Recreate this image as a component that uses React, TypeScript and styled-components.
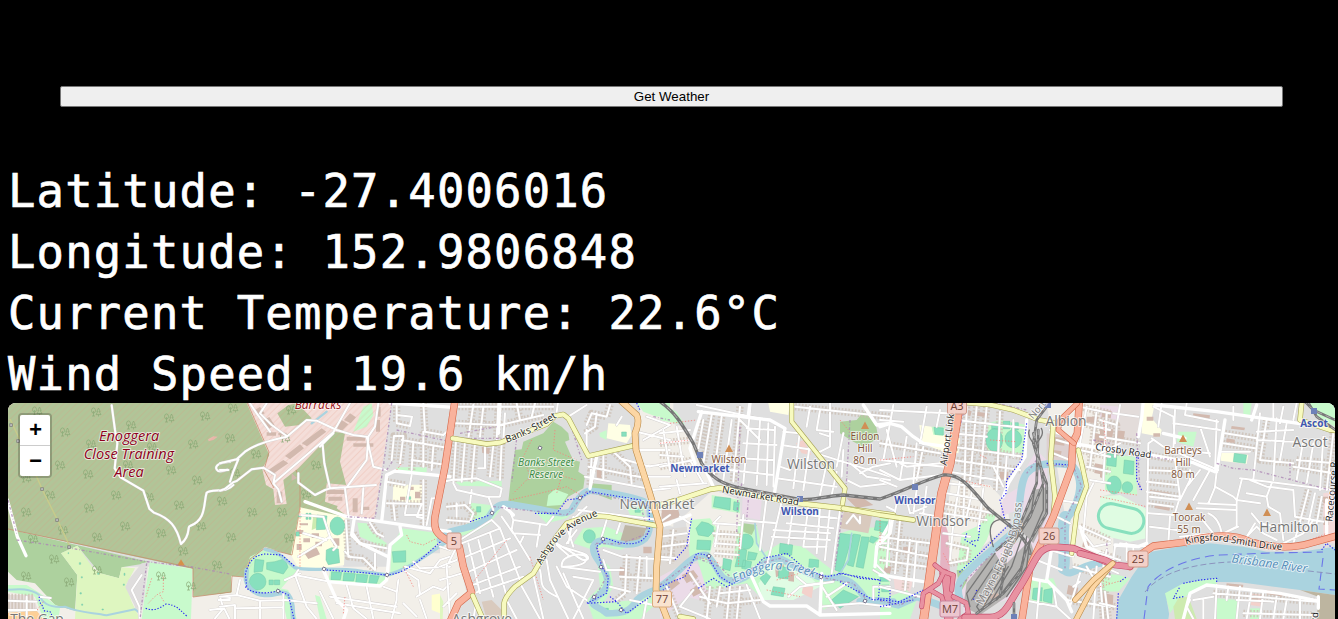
import React from 'react';
import styled, { createGlobalStyle } from 'styled-components';

const GlobalStyle = createGlobalStyle`
  html, body { height: 100%; }
  body { margin: 0; background: #000; color: #fff; overflow: hidden; }
`;

const Page = styled.main`
  display: flex;
  flex-direction: column;
  height: 619px;
  box-sizing: border-box;
  padding: 34px 3px 0 8px;
  overflow: hidden;
`;

const WeatherButton = styled.button`
  margin: 52px;
  height: 21px;
  flex: none;
  box-sizing: border-box;
  padding: 1px 6px;
  border: 1px solid #767676;
  border-radius: 2px;
  background: #efefef;
  color: #000;
  font: 13.333px 'Liberation Sans', Arial, sans-serif;
  line-height: 17px;
`;

const Readings = styled.section`
  display: flex;
  flex-direction: column;
  flex: none;
`;

const Reading = styled.div`
  height: 61px;
  box-sizing: border-box;
  padding-top: 2px;
  line-height: 61px;
  white-space: pre;
  font-family: Consolas, 'DejaVu Sans Mono', monospace;
  font-size: 45.5px;
  letter-spacing: 1.2px;
  -webkit-text-stroke: 0.7px #fff;
`;

const MapFrame = styled.section`
  position: relative;
  flex: none;
  height: 400px;
  border-radius: 8px;
  overflow: hidden;
  background: #dfdfdf;
`;

const MapCanvas = styled.svg`
  display: block;
  width: 1327px;
  height: 216px;
`;

const ZoomControl = styled.div`
  position: absolute;
  top: 10px;
  left: 10px;
  display: flex;
  flex-direction: column;
  border: 2px solid rgba(0, 0, 0, 0.2);
  border-radius: 4px;
  background-clip: padding-box;
`;

const ZoomButton = styled.button<{ $first?: boolean }>`
  width: 30px;
  height: ${(p) => (p.$first ? 31 : 30)}px;
  padding: 4px 0 0;
  border: 0;
  border-bottom: ${(p) => (p.$first ? '1px solid #ccc' : '0')};
  border-radius: ${(p) => (p.$first ? '2px 2px 0 0' : '0 0 2px 2px')};
  background: #fff;
  color: #000;
  font: bold 22px 'Liberation Mono', monospace;
  line-height: 26px;
  text-indent: 1px;
`;

const Line = styled.path`
  fill: none;
  stroke-linecap: round;
  stroke-linejoin: round;
`;

const Houses = styled(Line)`
  stroke: #cbbcb0;
  stroke-width: 22px;
  stroke-dasharray: 5 5;
  stroke-linecap: butt;
  opacity: 0.72;
`;

const StreetEdge = styled(Line)`
  stroke: #d0cccb;
  stroke-width: 8px;
`;

const Street = styled(Line)`
  stroke: #fff;
  stroke-width: 6px;
`;

const Avenue = styled(Line)`
  stroke: #fff;
  stroke-width: 10px;
`;

const CyclePath = styled(Line)`
  stroke: #2b2bf2;
  stroke-width: 3.4px;
  stroke-dasharray: 4 5;
  stroke-linecap: butt;
`;

const FootPath = styled(Line)`
  stroke: #f5837c;
  stroke-width: 2.4px;
  stroke-dasharray: 4 5;
  stroke-linecap: butt;
`;

const Boundary = styled(Line)`
  stroke: #ac87b4;
  stroke-width: 4px;
  stroke-dasharray: 8 6 2 6;
  stroke-linecap: butt;
  opacity: 0.8;
`;

const Label = styled.text<{ $color?: string; $size?: number; $italic?: boolean; $bold?: boolean; $halo?: string }>`
  font-family: 'Open Sans', 'Noto Sans', sans-serif;
  font-size: ${(p) => p.$size ?? 10}px;
  font-style: ${(p) => (p.$italic ? 'italic' : 'normal')};
  font-weight: ${(p) => (p.$bold ? 700 : 400)};
  fill: ${(p) => p.$color ?? '#222'};
  stroke: ${(p) => p.$halo ?? 'rgba(255,255,255,0.65)'};
  stroke-width: 2px;
  stroke-linejoin: round;
  paint-order: stroke;
  text-anchor: middle;
`;

const WOOD = '#b1c598';
const FOREST = '#add19e';
const MEADOW = '#def6c0';
const PARK = '#c8facc';
const PITCH = '#88e0be';
const SCHOOL = '#ffffe5';
const PALE = '#f2efe9';
const BASE = '#f4ded9';
const BLOCK = '#d9cabe';
const LILAC = '#ebdbe8';
const WATER = '#aad3df';

const RED = ['#f9b29c', '#d5684a'];
const ORANGE = ['#fcd6a4', '#ba8a48'];
const YELLOW = ['#f7fabf', '#a8a456'];
const PINK = ['#e892a2', '#c44a68'];

type Road = [string[], number, string];

interface Sheet {
  x: number;
  areas: [string, string][];
  pitches?: string;
  blocks?: string;
  water?: [number, string][];
  streets: string;
  avenues?: string;
  houses?: string;
  roads?: Road[];
  cycle?: string;
  foot?: string;
  boundary?: string;
}

const sheets: Sheet[] = [
  {
    x: 0,
    areas: [
      [PALE, 'M0 500H730V680H0Z'],
      [WOOD, 'M0 0H700V577L580 590L578 507L24 387Z'],
      [FOREST, 'M24 387L445 485L425 492L365 502L357 535L300 520L232 437L183 460L232 525L225 632L165 615L105 550L50 540L24 515Z'],
      [MEADOW, 'M183 460L232 437L280 505L300 520L357 535L365 502L405 505L378 555L395 605L420 657H225L232 525Z'],
      ['#dfdddd', 'M445 487L425 490L385 540L376 562L400 610L420 657L432 600Z'],
      [PARK, 'M449 487L578 507L573 657H425L438 560Z'],
      [PARK, 'M24 555L80 555L120 580L160 610L180 625L175 657H130L105 590L24 575Z'],
      ['#e5dddb', 'M24 585H100L112 630H24Z'],
      ['#fdcf97', 'M24 638L110 632L130 657H24Z'],
      ['#e9b9ad', 'M624 118L640 109L653 110L640 120L626 124Z'],
      ['#d69049', 'M531 497L543 478L555 497Z'],
    ],
    pitches: 'M204 458h2v3h-2ZM238 488h4v5h-4ZM293 519h4v4h-4ZM244 530h3v4h-3ZM372 520h3v6h-3ZM240 578h4v4h-4ZM370 552h3v4h-3ZM245 612h3v4h-3ZM306 627h4v3h-4Z',
    water: [
      [6, 'M20 570C60 566 90 565 118 585C125 605 145 625 195 620C240 640 280 637 320 646L405 628L420 640'],
    ],
    streets:
      'M335 16L345 90L352 130L344 205L362 232L430 272L448 326L462 338C510 355 530 380 543 432C575 405 560 380 570 378C620 360 610 310 620 278C635 265 680 280 700 255M690 186C650 185 640 205 655 213C665 216 675 212 682 209M425 525L395 570L418 620L419 657M24 602L110 605M24 630H110M80 590V650M118 590L152 594M660 590L670 625L630 630M670 620L690 660M670 625L645 655M660 590L690 594M655 600H690',
    avenues: 'M22 300L52 410L78 467',
    houses: 'M24 616H105M24 592H100',
    cycle: 'M437 625C460 635 480 625 498 612C530 615 540 630 560 648M118 590C115 615 130 610 130 630C140 640 150 625 155 645',
    foot: 'M490 530V575C470 580 455 600 445 610M480 585L492 605M455 535L438 590M130 605L110 632',
    boundary: 'M50 420L210 444L440 485L570 500L690 522M440 490L420 657M24 300L50 400',
  },
  {
    x: 220,
    areas: [
      [PALE, 'M30 460H700V680H0V580H35Z'],
      [WOOD, 'M0 0H400V360H238L213 465L135 440L90 478L74 530L33 528L33 575L0 583Z'],
      [BASE, 'M80 9H515L463 357L380 347L350 325L380 260L360 185L375 100L340 95L235 205L190 240L200 312L165 315L160 268L138 255L127 208L148 165Z'],
      [WOOD, 'M172 40L205 15L232 10L275 55L240 75L195 80Z'],
      [BASE, 'M320 250L380 255L372 325L315 305Z'],
      ['#dfdfdf', 'M515 9H700V400L540 385L500 500H370L378 355L463 357L490 200Z'],
      [SCHOOL, 'M240 322L380 352L372 495L315 505L235 505L213 465Z'],
      [SCHOOL, 'M520 254H610L600 312L518 300Z'],
      [PARK, 'M75 520L90 470L135 448L190 465L232 510L210 535L175 575L100 578Z'],
      [PARK, 'M330 510L500 525L490 555L325 545Z'],
      [PARK, 'M412 368L440 370L455 395L500 430L498 445L420 410Z'],
      [PARK, 'M545 385L660 400L650 435L580 490L510 530L515 440Z'],
      [PARK, 'M180 565L205 570L230 657H200Z'],
      [PARK, 'M285 585L300 590L320 657H300Z'],
      [PARK, 'M430 20L455 10L460 45L440 80L400 95Z'],
      [PARK, 'M530 202H620V217H530Z'],
      ['#ffffcf', 'M635 585L665 580L672 620L660 640L635 630Z'],
      ['#cdebb0', 'M280 345L295 345L288 385L275 390Z'],
    ],
    blocks:
      'M105 30l15-10 14 20-15 9ZM130 60l18-9 16 25-17 10ZM175 98h25v8h-25ZM140 97h28v10h-28ZM145 210l45-30 15 10-50 34ZM195 168l45-35 12 12-42 33ZM245 130l60-45 14 10-58 44ZM170 275h17v35h-17ZM345 80l20-20 20 13-20 20ZM372 60l18-20 18 12-16 18ZM380 110h55v12h-55ZM400 130h60v10h-60ZM320 270h55v12h-55ZM325 290h42v12h-42ZM398 295h15v42h-15ZM425 320h23v10h-23ZM470 20h12v30h-12ZM468 60h12v35h-12ZM240 370h24v6h-24ZM230 390h20v12h-20ZM275 400h22v14h-22ZM250 415h20v12h-20ZM230 432h15v18h-15ZM286 425h20v14h-20ZM335 365h20v20h-20ZM565 260h16v10h-16ZM585 275h16v20h-16ZM540 290h16v10h-16ZM215 220l16 14-16 8ZM265 330h40v0h-40ZM250 455l40-12 10 20-35 14ZM340 415h18v22h-18Z',
    pitches:
      'M291 345L321 348L316 388L289 389ZM330 378a22 27 0 1 0 44 0a22 27 0 1 0-44 0M319 450L335 443L355 447L359 488L325 494L318 480ZM105 478L132 481L127 514L102 517ZM140 488L165 485L195 476L204 502L190 522L165 515L140 508ZM88 545a25 25 0 1 0 50 0a25 25 0 1 0-50 0M147 540h13v14h-13ZM163 540h16v14h-16ZM517 455L557 452V486L520 487ZM335 515l30 2-4 22h-28ZM372 518l34 3-5 22h-32ZM410 522l34 3-5 23h-32ZM450 526l28 2-8 22h-24ZM228 396h10v12h-10ZM258 340h6v6h-6ZM267 340h6v6h-6ZM258 352h6v6h-6ZM267 352h6v6h-6ZM560 290h12v8h-12ZM236 345h9v6h-9Z',
    water: [
      [14, 'M80 510L78 540C85 570 110 585 145 585C170 585 190 570 205 585C225 610 215 640 220 657'],
      [10, 'M135 448C180 455 195 480 225 503C260 515 340 500 430 515L500 525C570 510 620 460 690 420'],
      [7, 'M275 70L320 35'],
    ],
    streets:
      'M0 190L50 178L75 155C110 130 160 120 200 110L260 60L290 62L350 90L400 105L440 110M30 245C40 210 50 190 55 178M0 272C30 265 30 245 50 243L95 208L130 203M130 203L165 225L160 250L340 97L390 9M140 10L120 40L155 75L200 108M90 10L110 40L150 95M235 220V248L285 285L315 270L330 265L468 255M308 135L313 190L330 265M340 100L300 140M380 262L440 180L445 110L465 80L475 9M440 110L460 200L500 210M375 265L385 345M425 340L430 265M160 250L175 268L185 305M0 210L25 210M530 40V70L570 78L576 50L530 45L530 10M610 10L615 95L670 105L690 85M515 180L522 108H550L540 190M545 120L690 145M580 125L575 210M610 95V200M640 140L635 210M575 180L680 195M610 240V375M575 225L555 340M500 245L555 255M500 310L605 312L590 350L610 355M520 310L525 360M555 345H610M635 295L620 375M640 295H650M378 360L385 470L430 475L465 510M400 400L420 430L500 445M450 368L470 400L490 410M465 460V510M375 455L390 470M235 510L225 525L330 545M195 540L240 520M190 580V657M195 600L290 610M0 590L50 585L60 540M50 585L120 602L190 600M50 625L190 622M120 602V657M0 620L45 615V657M225 525L260 620L290 657M300 575L340 657M330 590L530 620M350 610L540 640M380 555L400 625L440 657M440 560L460 657M490 560L530 575V600L515 657M535 540L530 580M550 510L595 540L600 580M555 500L630 520L660 480L690 470M590 590L640 560L670 570L690 550M600 600L620 657M550 610L590 650M660 440L690 450M580 485L600 505L690 500M240 345L310 350L330 410L350 440L340 450M330 410L300 430L235 470M250 400L320 420',
    avenues:
      'M485 365L500 225L525 213L690 230M255 305L380 350L690 395M402 360L395 405L420 430L500 468M540 380L545 405L510 435L500 540L480 558L325 545L310 510M325 545L350 600L380 630L370 660M510 9L700 22',
    houses: 'M530 20V70L570 78M610 10L615 95L670 105M515 180L522 108H550L540 190M545 120L690 145M580 125L575 210M610 95V200M640 140L635 210M575 180L680 195M610 240V375M500 245L555 255M500 310L605 312M520 310L525 360M378 360L385 470L430 475L465 510M400 400L420 430L500 445M450 368L470 400L490 410',
    cycle: 'M80 560L76 520C90 475 110 465 135 462L185 465L225 500M76 560C90 578 130 585 175 572L205 585L222 657M320 510L430 518L500 525C570 520 620 460 670 418',
    foot: 'M560 405L570 425L610 435L650 415M530 210L545 190M550 500L580 560M370 640L375 590M240 325V500',
    boundary: 'M515 9L490 200L465 355L380 350M530 90L690 125M500 210L520 180',
  },
  {
    x: 440,
    areas: [
      [PALE, 'M600 9H700V380L650 370L600 180Z'],
      [PALE, 'M0 430H45L80 580L30 657H0Z'],
      [FOREST, 'M340 65L365 80L385 100L388 120L375 125L390 160L400 180L420 185L415 215L435 228L430 265L385 290L350 335L205 305L212 240L225 150L245 148L250 125L310 100Z'],
      [PARK, 'M325 285L345 268L385 283L365 315L320 318Z'],
      [PARK, 'M93 308L150 315L180 330L150 370L100 400L50 410L45 395L90 365Z'],
      [PARK, 'M590 9H690V45L650 50L610 35Z'],
      [PARK, 'M400 430L430 385L500 380L550 400L590 430L540 450L490 440L460 450Z'],
      [PARK, 'M285 335L395 340L380 355L320 370Z'],
      [PARK, 'M470 465L510 500L520 560L490 610L580 600L650 575L690 570L600 657H460L440 600L480 560Z'],
      [PARK, 'M45 245L185 242V260L60 257Z'],
      [PARK, 'M478 100L500 90L500 120L480 110Z'],
      [PARK, 'M560 320L610 320L615 350L570 345Z'],
      [SCHOOL, 'M505 70L570 75L575 105L560 130L500 115Z'],
      [MEADOW, 'M0 585L10 605L8 657H0Z'],
      [BLOCK, 'M125 605L155 600L185 630L180 657H140Z'],
      ['#bdb5a5', 'M555 375L620 385L600 432L540 425Z'],
      [FOREST, 'M450 250L515 255V300L450 275Z'],
    ],
    blocks: 'M125 140l25 5-3 17-20-3ZM665 340l25-12v30l-25 7ZM610 440h25v20h-25ZM540 500l17 5-3 24-17-4ZM470 210h14v28h-14Z',
    pitches: 'M110 320h12v16h-12ZM430 409a18 20 0 1 0 36 0a18 20 0 1 0-36 0M545 96h14v13h-14ZM485 625h20v14h-20ZM585 325h16v12h-16Z',
    water: [
      [20, 'M0 420L30 395C90 380 130 375 150 345C170 310 190 310 220 314L300 328C350 340 380 345 395 330C410 300 430 275 450 272C500 278 560 285 600 300C640 310 630 350 628 390C620 435 570 438 530 430C490 420 470 415 460 440C455 470 490 490 500 530C510 570 480 580 460 600C450 620 480 620 500 640C540 640 570 640 590 600C620 570 650 575 700 545'],
    ],
    streets:
      'M55 20L340 20M45 70L180 75L310 45M100 15L85 115M130 20L120 110M175 10L170 120M195 40L190 120M230 10L240 60M285 10L275 50M355 0L350 35M48 120L40 250M75 125L65 245M105 130L95 245M135 132V205H115M160 135L150 230M185 130L180 240M10 245L35 240L110 235L185 265L180 290L140 290L50 270L40 250M20 320L75 315L100 340L90 365L20 360M50 310V350M95 270L90 310M145 290L160 330M470 40L465 80L435 100M510 15L500 50L455 40L440 75M545 50L530 75M385 50L440 15M455 170L450 260M490 160V235M445 200L620 235M435 230L620 265M520 155L570 200L575 250M540 175L630 200M440 90V150M600 150L690 150M610 120L690 75M590 95L690 120M620 200L690 190M625 230L690 230M640 270L690 265M620 50L690 75M655 370L690 345M630 335L690 320M155 360L60 420M155 360L180 385L65 430M180 385L240 540M150 400L200 590M115 420L160 590M85 430L120 580M65 475L210 415M75 520L230 450M85 560L240 500M100 580L250 530M210 335L220 360L320 375L340 350M185 350L220 400L300 405M220 360L215 390L270 480M300 375L290 440M250 410L240 430M355 400L440 320M415 330L660 360M400 350L385 430M380 380L400 440M350 430L400 460C440 500 460 470 430 460L350 435L390 470M365 500C360 460 440 455 440 475C440 500 380 500 365 500L480 515M320 480L330 540L385 657M300 510C310 550 290 560 350 590M280 525L310 657M240 550L300 657M350 500L380 560L440 600M370 520L430 657M400 530L460 540L400 657M200 600L230 657M410 390L380 430M500 360L485 410M540 370L530 400M490 450L545 470L690 480M560 465L555 580L530 600M540 530L640 535M600 470L590 580M620 470V535M490 480L500 510L550 510M510 560L570 575M0 500L50 480M0 540L65 520M45 450L20 500L30 657M50 580L10 620M110 600L100 657M570 600L640 615M620 600L610 657M640 615L690 600',
    avenues: 'M655 378L690 370M190 320L205 330L220 345M175 100L180 10M450 265L470 170',
    houses: 'M55 20L340 20M45 70L180 75L310 45M100 15L85 115M130 20L120 110M175 10L170 120M230 10L240 60M48 120L40 250M75 125L65 245M105 130L95 245M160 135L150 230M185 130L180 240M20 320L75 315L100 340L90 365L20 360M470 40L465 80L435 100M510 15L500 50L455 40L440 75M455 170L450 260M490 160V235M445 200L620 235M520 155L570 200L575 250M540 530L640 535M600 470L590 580M560 465L555 580L530 600',
    roads: [
      [RED, 20, 'M45 0L15 200L-15 350C-20 390 -10 405 30 425L58 440L70 500L95 577L55 610L30 665'],
      [YELLOW, 14, 'M38 115L140 132L180 128L320 72L345 48L370 43L385 55L445 168L580 137'],
      [YELLOW, 14, 'M192 665V610Q195 590 225 560L280 520L330 435L380 370L450 347L500 350L655 378'],
      [YELLOW, 14, 'M98 587L130 660'],
      [ORANGE, 18, 'M540 0L590 45Q600 65 585 100L588 150L620 250L660 380L650 500L648 570L685 665'],
    ],
    cycle: 'M90 365L150 345M285 340L350 340L380 300L420 295L450 275L600 300L628 320V390C610 440 560 440 500 415L470 440L485 500L505 530L500 580L440 610L530 605L560 640L630 590L690 560M510 590L530 605M590 9L600 30',
    foot: 'M275 120L250 170L270 230L220 280M345 90L340 150L410 180M265 240L320 180L370 210L350 280M210 300L300 280L380 260L430 290M280 230L340 220L410 240M80 570L200 420M270 470L310 600',
    boundary: 'M80 115L230 115L215 250M385 50L425 180M60 100L170 80M640 50L690 60M160 320L300 335L380 345L440 275L600 310L625 400L540 432L465 430L500 530L460 600',
  },
  {
    x: 660,
    areas: [
      [PALE, 'M0 60L70 80L160 250L90 300L0 370Z'],
      [PARK, 'M0 10L50 35L75 75L0 60Z'],
      [PALE, 'M75 345L160 270L240 300L245 500L190 530L150 470L90 460Z'],
      [LILAC, 'M248 290L305 300L300 360L245 350Z'],
      [LILAC, 'M0 520L110 490L160 560L120 600L80 590L0 657Z'],
      [PARK, 'M90 360L150 355L170 385L150 460L180 500L220 480L235 370L290 375L310 460L360 430L430 440L490 490L530 520L540 400L590 385L690 380V600L640 610L600 590L540 600L490 630L480 560L420 560L370 590L310 600L260 550L200 560L140 570L110 470L60 500L90 430Z'],
      [PARK, 'M155 285L240 300V340L155 325Z'],
      ['#e0fce4', 'M345 490L400 505L450 530L480 560L400 600L310 600L295 550Z'],
      [FOREST, 'M540 65L590 60L610 35L645 60L655 115L610 140L580 125L540 100Z'],
      [SCHOOL, 'M325 9H390L385 45L330 35Z'],
      [FOREST, 'M250 370L290 375L275 405L250 395Z'],
      ['#f3d1cb', 'M408 130L430 120L455 165L425 160Z'],
      ['#f3d1cb', 'M430 555L460 560L455 595L425 580Z'],
      ['#d9cabe', 'M555 320L640 330L625 400L540 385Z'],
      ['#dedad6', 'M0 390L80 380L90 480L0 530Z'],
    ],
    blocks: 'M5 330l50 0 5 20-55 20ZM560 295l50 0 30 20-50 10ZM20 550l25-15 15 15-25 20ZM65 525l35-15 15 20-35 20ZM90 570l25-15 15 20-30 15ZM345 500l25-8 8 25-30 15ZM385 515l17 0v30l-17-2Z',
    pitches:
      'M165 290L212 295L210 330L160 320ZM222 305L238 308L235 335L220 330ZM108 385L125 365L145 370L160 380V395L145 410L115 405ZM112 420L153 422L150 450L110 448ZM236 425a22 23 0 1 0 44 0a22 23 0 1 0-44 0M190 475L215 480L210 512L188 506ZM238 445L260 450L255 500H225ZM265 455L292 460L285 480H262ZM250 480L275 485L270 510L245 505ZM360 430L398 435L395 465L358 460ZM448 477L476 480L475 502H446ZM357 500L387 502L384 537L355 534ZM300 535L318 518L332 530L315 555ZM340 560L375 565L370 590L333 584ZM540 400L578 405L545 517L525 510ZM580 402L602 405L580 500L562 495ZM605 410L628 412L610 505L588 500ZM633 408L655 415L640 430L628 425ZM648 362L688 365L680 395L643 390ZM515 600L550 570L595 590L540 625ZM660 530h26v14h-26ZM665 555h22v20h-22Z',
    water: [
      [20, 'M0 560C60 520 90 460 140 465C180 500 170 540 220 543C270 540 300 480 360 475C410 500 450 530 500 535C570 525 590 560 620 600L700 605'],
      [5, 'M285 370L290 430L320 475M575 400L565 480L540 520'],
    ],
    streets:
      'M110 15L320 60M130 60L115 145M155 45L130 190M185 50L160 235M215 60L190 240M240 20L220 245M270 30L250 250M300 60L290 255M325 70L320 255M345 80L340 260M420 90L400 265M450 130L430 270M500 190L480 285M530 215L515 285M240 60L300 120M260 85L340 90M250 130L350 135M235 175L340 180M210 210L340 225M370 95L420 100M365 135L460 150M360 200L390 210M350 235L530 260M405 20L690 50M450 20L440 80M480 30L470 90L520 95M510 10V140L470 160M550 100L530 200M480 100L510 110M470 160L690 230M550 150L545 230M570 190L620 230L690 240M560 240L600 260L690 250M600 220L640 200L690 190M250 345L240 445M320 290L300 450M365 305L320 500M400 320L385 430M445 320L430 440M480 325L470 460M510 320L495 480M540 330L515 520M240 360L350 370M340 390L510 400M335 410L510 420M390 340L530 355M380 370L520 385M430 440L500 440M0 100L90 90M0 130L95 120M0 165L70 170M0 200L100 180M10 90L30 210M50 80L75 230M90 180L130 250M0 260L140 250M50 240L60 280M160 370L240 375M175 375L165 440M160 400L235 405M165 430L235 435M165 460L235 465M160 370L180 350M0 440L85 430M40 390L30 490M0 470L50 475M0 410L80 400M60 350L90 370M20 560L60 657M90 520L150 610M120 590L200 610L300 600M100 570L60 620L150 657M150 560L140 657M180 560L170 620M210 560L200 657M240 560L230 657M260 555L300 657M180 580L270 570M410 530L440 555L480 550L530 630M385 590L420 560L520 545M500 590L560 550M480 620L600 610L690 620M640 510L690 540M640 600V560L690 560M655 430L645 490L680 525M650 430L690 430M560 370L580 345L600 370V350',
    avenues:
      'M95 120L160 260M125 35L90 145L105 190M115 35L330 60L375 85L340 300M270 10L265 45M0 380L90 345M275 530L310 605L330 618H440L480 645L690 640M690 370L650 440L645 500M610 15L650 75L690 70M485 520L480 640',
    houses: 'M130 60L115 145M155 45L130 190M185 50L160 235M240 20L220 245M0 440L85 430M40 390L30 490M0 470L50 475M160 400L235 405M165 430L235 435M165 460L235 465M20 560L60 657M90 520L150 610M120 590L200 610L300 600M150 560L140 657M180 560L170 620M210 560L200 657M240 560L230 657M405 20L690 50M0 130L95 120M0 165L70 170M0 200L100 180',
    roads: [
      [YELLOW, 13, 'M395 0V65L555 265L545 328'],
      [YELLOW, 15, 'M0 315L60 298L150 268L180 264L400 308L550 325L700 345'],
      [YELLOW, 14, 'M100 657L60 650'],
    ],
    cycle: 'M45 480L80 440L95 355M0 560L75 530L110 460L140 465M115 565L160 535L200 560L260 530L310 475L380 460L440 510L500 530L550 520L600 535L660 540M140 465L180 530L220 555M540 545L640 600L690 595M535 520L660 540L655 600',
    foot: 'M0 130L90 120M110 470L180 490M320 570L420 590M240 400L235 500M540 60L590 120M30 70L110 60M350 540L470 505',
    boundary: 'M240 80L230 400M245 250L240 290M570 60L560 240L525 500M265 300L260 360M0 555L110 475L180 500L220 540L300 490L360 475L500 535L580 550L620 600',
  },
  {
    x: 880,
    areas: [
      [PALE, 'M215 240L330 255L380 310L390 370L320 430L240 490L180 480Z'],
      [PALE, 'M500 9H700V500H580Z'],
      [SCHOOL, 'M118 75L155 80L160 100L240 115L235 160L190 155L125 130Z'],
      [PARK, 'M325 70L360 60L440 75L430 160L320 155Z'],
      [PARK, 'M245 400L300 375L330 330L350 340L320 420L260 520L230 515Z'],
      [PARK, 'M0 350L30 355L20 430L0 420Z'],
      [PARK, 'M455 555L520 555V610L450 605Z'],
      [PARK, 'M445 540L520 535L530 560L455 560Z'],
      [LILAC, 'M470 150L500 180L510 400L450 500L380 600L250 640L240 560L330 450L440 420L420 330L440 200Z'],
      [LILAC, 'M370 290L420 260L415 330L360 350Z'],
      ['#ddd0d0', 'M500 100L590 110L570 200L500 190Z'],
      ['#b5b4b2', 'M250 620L260 550L340 450L370 500L450 420L470 480L380 590L300 645Z'],
      ['#b5b4b2', 'M460 270L505 260V340L460 430L420 390Z'],
      ['#e5b3c2', 'M185 340L205 400L210 520H180Z'],
      [FOREST, 'M230 510L270 510L260 545L240 580Z'],
      ['#f2dad9', 'M40 530L100 540L90 575L45 570Z'],
      [PARK, 'M0 600L80 570L110 600L90 657H0Z'],
      ['#dfe8dc', 'M660 290L700 280V395L660 385Z'],
      [PARK, 'M155 80L195 80L190 108L160 104Z'],
    ],
    blocks: 'M255 30l20 4-4 14-20-4ZM290 35l35 5-3 12-35-5ZM520 110l35 5-2 22-33-4ZM520 150l25 4-4 17-22-3ZM620 50l35 0-5 20-32-3ZM645 100l30 5-4 30-26-5ZM645 190l30 6-4 28-28-5ZM545 50l22 0 0 20-20 0ZM515 385l20 4 0 22-20-4ZM330 590l20-15 10 15-20 15ZM565 555l30 8-5 28-30-10ZM70 440l25 3-3 20-24-4ZM15 495l20 5-5 22-20-6ZM610 420l20 5-4 20-19-5ZM360 215h25v22l-25 3Z',
    pitches:
      'M318 120a25 34 0 1 0 50 0a25 34 0 1 0-50 0M375 117a25 27 0 1 0 50 0a25 27 0 1 0-50 0M335 70h22v16h-22ZM370 64h20v22h-20ZM395 68h20v22h-20ZM162 82L190 84V105L165 103ZM460 565L487 563L485 603L457 597ZM492 570L518 565L515 610L490 603ZM0 365L20 367L15 398L0 395Z',
    water: [
      [22, 'M-60 605L0 602L55 615L110 590L190 620L240 600C220 540 260 520 300 480L390 405C430 360 410 260 440 220C470 180 560 190 580 200C620 250 590 320 562 355C540 420 560 470 550 510C580 540 600 480 700 490'],
      [34, 'M555 350C540 420 560 470 550 505'],
    ],
    streets:
      'M0 30L200 40M0 60L70 65M40 15L10 180M80 110L60 240M110 130L100 250M140 20L120 130M180 30L170 80M0 130L180 160M0 180L190 200M0 210L60 240L180 225M20 90L50 200M130 140L110 240M60 190L80 200L180 190M0 240L50 260M260 20L250 360M290 20L270 240M320 20L300 250M360 35L350 270M230 60L440 85M220 100L320 110M220 140L430 170M220 180L420 210M210 215L350 240M200 250L300 260M200 280L310 300M190 310L340 340M190 340L320 360M240 240L220 370M280 255L260 350M310 265L295 390M340 200L370 260M400 60V170M380 170L375 240M190 400L270 410M200 430L265 445L260 480L210 490M220 370L210 480M120 340L180 350M0 440L150 470M30 350L20 500M60 360L45 520M90 420L75 570M110 430L100 560M0 410L150 430M0 480L140 500M0 560L120 590M50 310L40 360M80 300L90 340L140 320M110 270L100 340M140 260L130 340M20 320L40 330M530 120L600 140M520 160L570 180M510 90L580 120M600 20L690 40M610 70L690 90M620 20L600 130M650 30L630 200M680 40L670 240M600 150L690 170M620 200L690 215M630 240L690 250M600 380L690 420M620 290L610 400L640 440L690 430M530 350L570 370M535 300L600 310M470 480L545 510M510 450L580 470M580 500L690 530M600 520L570 620M620 500L650 550M650 500L640 657M520 560L530 620L570 657M560 600L690 620M660 530L670 657M430 600L530 620M480 540L470 657M600 545L580 560M640 250L620 290',
    avenues:
      'M0 80L30 70L65 80L100 110L130 130L200 140M440 60L435 170L385 250L370 290M40 340L30 400L0 430M515 445L500 540L560 600L575 635M0 525L130 545M580 130L690 150M450 535L500 545M600 380L620 440L690 470',
    houses: 'M0 130L180 160M130 140L110 240M260 20L250 360M290 20L270 240M320 20L300 250M360 35L350 270M220 140L430 170M220 180L420 210M190 310L340 340M190 340L320 360M200 430L265 445L260 480L210 490M0 440L150 470M60 360L45 520M90 420L75 570M0 410L150 430M0 480L140 500M600 20L690 40M610 70L690 90M650 30L630 200M600 150L690 170M620 200L690 215M600 380L690 420M580 500L690 530M560 600L690 620M660 530L670 657',
    roads: [
      [YELLOW, 14, 'M260 8L330 14L400 30L480 60L520 68L512 180L525 290L520 345'],
      [YELLOW, 13, 'M595 150L605 190L620 260L590 340L575 460'],
      [YELLOW, 14, 'M-110 325L0 345L100 360'],
      [RED, 25, 'M240 0L210 190L185 280L130 665'],
      [RED, 20, 'M598 0L592 100L578 130L575 200L520 350L450 500L425 665'],
      [RED, 14, 'M592 10L540 60L535 90L582 130'],
      [ORANGE, 15, 'M690 500L640 560L585 665'],
      [PINK, 26, 'M206 665V600L200 540L192 520'],
      [PINK, 13, 'M165 495L190 515L220 525L215 570M190 520L175 550L130 580L125 620M150 570L185 590L195 620M220 590L260 610L265 640L240 657'],
      [PINK, 19, 'M255 652H330C380 650 390 600 420 560C470 480 470 445 520 440L580 445L690 490'],
    ],
    cycle: 'M440 70L425 180L380 240L378 280L360 300L375 360M300 375L295 420L270 425M390 370L310 450L235 520M260 400L255 420L290 440M0 600L60 605L130 570M0 620L100 600M30 570V610M290 570L280 600M500 190L570 195',
    foot: 'M330 120L410 125M0 360V430M190 460L210 500M300 165L320 175M0 180L100 170M240 240L330 260M660 540L690 550',
    boundary: 'M250 40L220 160M470 180L440 220M345 9L440 30M640 120L690 130M500 400L560 380M680 430L690 530M500 195L580 200L605 260L555 360L555 505M240 560L390 405L430 300M0 602L60 615L110 590',
  },
  {
    x: 1100,
    areas: [
      ['#e3dcda', 'M0 9H120L115 110L0 150Z'],
      [PARK, 'M15 160L105 170L112 285L15 270Z'],
      ['#dffce2', 'M0 290L60 285L145 330L140 415L90 425L0 405Z'],
      [SCHOOL, 'M130 9L165 10L155 55L185 90L180 110L125 100Z'],
      [SCHOOL, 'M365 153L445 165L440 192L362 182Z'],
      [PARK, 'M235 95L290 95L280 140L230 125Z'],
      [PARK, 'M430 9L455 10L450 50L430 48Z'],
      [PARK, 'M620 9H705V80L660 55Z'],
      [WATER, 'M48 657L55 600L95 530L130 480L155 455L250 437L330 430L430 440L500 455L600 455L706 440V585L600 570L420 547L280 545L215 595L205 657Z'],
      ['#dfdfdf', 'M200 600L270 555L350 545L600 572L662 590V657H210Z'],
      ['#bdb5a0', 'M600 570L706 585V657H650L655 590Z'],
      [PARK, 'M195 580L250 550L350 535V555L290 565L235 605L210 640Z'],
      [PARK, 'M350 595L415 600V657H350Z'],
      ['#cdebb0', 'M235 595L265 590L290 657H225L220 620Z'],
      [PARK, 'M0 520L55 525L90 535L55 575H0Z'],
      [PARK, 'M450 625H480V657H450Z'],
      ['#f3dad9', 'M670 280L706 275V430H670Z'],
      ['#e3dcda', 'M0 575H60L45 657H0Z'],
      ['#f3d1cb', 'M450 580L490 585L485 620L450 615Z'],
      [LILAC, 'M0 15L60 20L60 60L0 50Z'],
    ],
    blocks: 'M5 30l30 3-3 22-27-4ZM0 85l40 3-3 25-37-4ZM45 90l30 4-4 24-27-4ZM0 200l12 3-3 32-9-3ZM280 40l50 6-2 14-50-6ZM395 78l40 5-2 8-40-5ZM150 270l60 8-2 9-60-8ZM165 315l45 8-2 9-45-8ZM380 115l25 4-2 10-25-4ZM10 580l30 5-2 40-30-10ZM455 588l20 2v15l-20-2ZM380 550l50 4-2 12-50-4ZM500 570l50 8-3 12-47-8ZM140 50h20v12h-20ZM160 100h20v10h-20ZM670 290h14v20h-14ZM670 350h16v25h-16Z',
    pitches: 'M22 160L50 165L48 200L20 196ZM73 180L102 184L100 224L70 220ZM20 255a22 27 0 1 0 44 0a22 27 0 1 0-44 0M66 262a16 17 0 1 0 32 0a16 17 0 1 0-32 0M403 160L440 165L436 190L400 185Z',
    streets:
      'M0 60L50 75L45 170M0 110L120 130M60 15L50 75M160 20L220 50L225 130M185 10L175 80M220 70L360 90M225 30L220 150L330 160M260 10L255 45L355 65M300 80L330 170M160 120L145 130L140 430M155 115L190 140L355 210M145 165L230 180M145 210L260 215M140 245L230 255M140 275L240 290M145 310L220 320M145 340L220 345M150 380L230 390M210 350L205 430M225 180L240 290L225 340M330 210L280 300M300 210L265 255M270 210V240L240 300L150 290M350 60L345 215M375 100L470 115M370 130L465 145M360 155H450M480 40L460 240M500 60L480 180L580 190M530 55L520 240M470 120L580 125M470 95L580 90M560 70L540 180M610 120L590 240M640 130L620 250M670 110L660 270M700 100L680 270M590 180L705 190M580 200L700 220M420 235L700 270M425 240L410 300L480 310M450 240L500 260L580 270L585 350L670 365M440 280L500 290L515 250M500 290L505 320L540 340L550 420M350 215L345 260L400 290L410 300V380L370 400M345 262L325 310M295 310L410 315M290 325L410 330M325 340C350 350 360 370 365 400M300 350L340 400L240 410M465 370L440 410L470 380L490 400L530 420M455 340L480 370L530 380M370 400L415 380M600 370L580 430M625 270L600 365M645 280L625 370M665 290L650 370M640 360L610 400L550 430M270 600L260 620L280 657M350 555L345 657M385 560L380 600M420 560L410 657M455 570L440 657M490 575L480 657M530 590L520 657M560 600L550 657M600 600V657M340 580L650 605M410 600L520 605M430 640L640 645M280 600L340 590M310 600V657M15 575L25 657M0 610L45 620M80 430L45 440L40 480M60 430L140 440M20 450L10 500L55 520M80 440V480M100 440V470M0 460L60 480M40 40L115 50M0 160L60 130M590 9L580 60M550 20L540 70M520 10V60M400 20V60',
    avenues:
      'M130 0L125 55L115 110M165 15L350 35L700 85M375 60L350 215M470 15L455 60M150 165L280 188L345 215M255 115L190 100M680 300V420M140 430L115 440L45 435M250 657L270 580L320 555L540 580L650 602M655 590V625',
    houses: 'M0 60L50 75L45 170M0 110L120 130M145 165L230 180M145 210L260 215M140 245L230 255M140 275L240 290M145 310L220 320M375 100L470 115M370 130L465 145M500 60L480 180L580 190M590 180L705 190M580 200L700 220M625 270L600 365M665 290L650 370M340 580L650 605M15 575L25 657M0 610L45 620M0 460L60 480M430 640L640 645M700 100L680 270',
    roads: [
      [YELLOW, 14, 'M605 9L600 60L690 90L710 92'],
      [RED, 20, 'M90 500L120 465L160 438L250 427C330 403 400 400 450 425C520 445 580 445 630 430L720 405'],
      [PINK, 18, 'M-60 460L15 480L45 495L90 500'],
      [ORANGE, 15, 'M-75 600L-20 540L38 490'],
    ],
    cycle: 'M125 270L110 240V170L120 180M55 580L50 657M60 545L80 530M250 550L300 540L350 535V550M665 450L680 430L705 450M250 590L220 595L240 560',
    foot: 'M0 290L140 320M0 270L110 285M250 420L260 440M630 420L680 400M0 560L70 540M20 160L10 60',
    boundary: 'M350 190L400 205L460 210L690 270M110 100L120 270M570 190V240M150 170L220 180',
  },
];

const RAILS: [number, number, string][] = [
  [880, 10, 'M-660 5C-610 40 -590 80 -560 130L-535 190C-500 240 -470 250 -430 262L-250 297C-210 305 -180 290 -110 285L0 297C80 270 130 240 190 225C240 220 270 260 320 320C360 360 440 400 450 460'],
  [880, 8, 'M500 20L470 60L460 130L475 180L500 250V340L440 440L420 520L370 580L290 640M460 100L480 190L490 250L450 350L380 460L360 590M475 90L470 250L410 400L350 450M402 610V657'],
  [880, 4, 'M340 440C320 380 330 350 390 360M345 460L260 580L270 620M355 480L275 600M365 500L290 620L300 635M385 500L310 620M430 400L395 500L330 610M440 410L425 500L350 600M450 420L440 500L380 590M465 260L455 330L420 390M490 260V330L455 410M448 90C440 110 455 120 460 130M484 85C495 105 475 120 470 130'],
  [1100, 8, 'M620 0L650 50L706 90M610 0L640 30L706 60'],
];

const TREES: [number, number][] = [
  [37, 411], [96, 412], [169, 418], [205, 416], [65, 432], [91, 444], [193, 444], [152, 447], [128, 465], [60, 465], [26, 478], [88, 474], [171, 470], [197, 480],
  [50, 495], [116, 495], [89, 508], [149, 497], [179, 505], [222, 501], [26, 512], [125, 526], [63, 530], [161, 533], [201, 526], [97, 537], [33, 539], [183, 551],
  [54, 559], [97, 570], [161, 576], [217, 565], [26, 576], [69, 582], [191, 586], [131, 425], [233, 408], [291, 410], [230, 438], [256, 454], [285, 438], [235, 473],
  [316, 465], [306, 494], [252, 512], [282, 512], [231, 537], [289, 538],
];

const PEAKS: [number, number][] = [[729, 448], [865, 425], [1183, 438], [1189, 506], [1267, 512]];
const STATIONS: [number, number][] = [[700, 455], [800, 499], [915, 487], [1048, 405], [1314, 411], [1014, 617]];

const SHIELDS: [string, number, number, number, string, string][] = [
  ['5', 454, 541, 14, '#f3d0c8', '#d09a8a'],
  ['77', 662, 599, 19, '#f9e3cf', '#d9aa7c'],
  ['A3', 957, 406, 19, '#f3d0c8', '#d09a8a'],
  ['26', 1049, 536, 20, '#f3d0c8', '#d09a8a'],
  ['M7', 950, 609, 20, '#ecc6cf', '#c987a0'],
  ['25', 1138, 559, 20, '#f3d0c8', '#d09a8a'],
];

const CURVED: [string, string, string, number, string, boolean][] = [
  ['banks', 'M503 444Q533 434 560 415', 'Banks Street', 9.6, '#222', false],
  ['ashgrove', 'M540 567C552 549 557 530 600 515', 'Ashgrove Avenue', 9.6, '#222', false],
  ['newmarket', 'M718 492L802 506', 'Newmarket Road', 9.6, '#222', false],
  ['airport', 'M946 470L955 410', 'Airport Link', 9.6, '#222', false],
  ['mayne', 'M978 615C1000 570 1022 545 1022 492', 'Mayne Freight Bypass', 11, '#85817f', false],
  ['north', 'M1031 422L1070 376', 'North Coast', 9.6, '#777', false],
  ['crosby', 'M1090 449L1156 459', 'Crosby Road', 9.6, '#222', false],
  ['kingsford', 'M1184 545C1220 534 1238 548 1284 550', 'Kingsford Smith Drive', 9.6, '#222', false],
  ['race', 'M1332 526L1338 458', 'Racecourse R', 9.6, '#222', false],
  ['creek', 'M731 585C760 568 785 563 818 580', 'Enoggera Creek', 12, '#568fba', true],
  ['river', 'M1222 561L1316 574', 'Brisbane River', 12, '#568fba', true],
];

function Roadway({ road }: { road: Road }) {
  const [[fill, edge], width, d] = road;
  return (
    <>
      <Line d={d} stroke={edge} strokeWidth={width + 2} />
      <Line d={d} stroke={fill} strokeWidth={width - 1.5} />
    </>
  );
}

function Layer({ render }: { render: (s: Sheet) => React.ReactNode }) {
  return (
    <>
      {sheets.map((s) => (
        <g key={s.x} transform={`translate(${s.x} 400) scale(.33333)`}>{render(s)}</g>
      ))}
    </>
  );
}

function StreetMap() {
  return (
    <MapCanvas viewBox="8 403 1327 216" aria-label="Map">
      <defs>
        <pattern id="hatch" width="9" height="9" patternUnits="userSpaceOnUse" patternTransform="rotate(45)">
          <path d="M2 0V9M6.5 0V9" stroke="#e09078" strokeWidth=".6" opacity=".34" />
        </pattern>
        <g id="trees" fill="none" stroke="#8aa876" strokeWidth=".7">
          <ellipse cx="-2.5" cy="-1.5" rx="2" ry="2.6" />
          <path d="M-2.5 -1V4M-4 4H-1M2.5 -4L.8 -.5H1.8L0 2.6H5L3.2 -.5H4.2ZM2.5 2.6V4.5" />
        </g>
        {CURVED.map(([id, d]) => <path key={id} id={id} d={d} />)}
      </defs>
      <rect x="8" y="403" width="1327" height="216" fill="#dfdfdf" />
      <Layer render={(s) => s.areas.map(([fill, d], i) => <path key={i} fill={fill} d={d} />)} />
      <path fill="url(#hatch)" d="M8 400H391L375 519L300 508L291 555L265 547L245 575H231V592L193 597V568L8 530Z" />
      <path d="M8 529L193 568V597L231 592L232 576L245 577L250 559L265 548L292 555L300 508M247 402L269 452L264 470L274 488M300 508V480L296 470" fill="none" stroke="#c58c6c" strokeWidth="1" opacity=".75" />
      {TREES.map(([x, y], i) => <use key={i} href="#trees" x={x} y={y} />)}
      <Layer render={(s) => (
        <>
          {s.houses && <Houses d={s.houses} />}
          {s.blocks && <path fill="#d2b9ae" d={s.blocks} />}
          {s.pitches && <path fill={PITCH} stroke="#74c9a8" strokeWidth="1.5" d={s.pitches} />}
          {s.water?.map(([w, d], i) => <Line key={i} d={d} stroke={WATER} strokeWidth={w} />)}
        </>
      )} />
      <rect x="1098" y="506" width="46" height="25" rx="12.5" fill="none" stroke={PITCH} strokeWidth="3" transform="rotate(13 1121 519)" />
      <Layer render={(s) => (
        <>
          <StreetEdge d={s.streets} />
          <Street d={s.streets} />
          {s.avenues && <Avenue d={s.avenues} />}
          {s.foot && <FootPath d={s.foot} />}
          {s.boundary && <Boundary d={s.boundary} />}
          {s.cycle && <CyclePath d={s.cycle} />}
        </>
      )} />
      <Layer render={(s) => s.roads?.map((r, i) => <Roadway key={i} road={r} />)} />
      <path d="M10 419L27 455L43 491L58 521L70 547" fill="none" stroke="#c7cb8b" strokeWidth="1.5" />
      {[[11, 425], [18, 441], [42, 489], [57, 520], [69, 547]].map(([x, y]) => (
        <rect key={x} x={x - 1.2} y={y - 1.2} width="2.5" height="2.5" fill="#ccc" stroke="#777" strokeWidth=".8" />
      ))}
      {RAILS.map(([x, width, d], i) => (
        <g key={i} transform={`translate(${x} 400) scale(.33333)`}>
          <Line d={d} stroke="#777" strokeWidth={width} />
          {width > 4 && <Line d={d} stroke="#ccc" strokeWidth="2" strokeDasharray="14 14" />}
        </g>
      ))}
      <path d="M1144 619L1148 587C1160 570 1190 557 1220 555L1270 553L1323 552M1323 558L1319 589L1335 590" fill="none" stroke="#6b76e8" strokeWidth="1.1" strokeDasharray="9 5" />
      <path d="M1145 592C1160 573 1190 564 1230 562L1335 574" fill="none" stroke="#8c94be" strokeWidth="1" strokeDasharray="6 3" />
      {[[540, 448], [492, 513], [580, 498], [603, 539], [601, 567], [594, 597], [621, 610], [709, 556], [278, 591], [324, 569], [821, 577], [865, 601], [387, 575]].map(([x, y], i) => (
        <rect key={i} x={x - 1.5} y={y - 1.5} width="3" height="3" fill="#fff" stroke="#675f7c" strokeWidth=".8" transform={`rotate(30 ${x} ${y})`} />
      ))}
      {PEAKS.map(([x, y]) => <path key={x} d={`M${x - 4} ${y + 4}L${x} ${y - 3.5}L${x + 4} ${y + 4}Z`} fill="#d08f55" />)}
      {STATIONS.map(([x, y]) => <rect key={x} x={x - 3} y={y - 3} width="6" height="6" fill="#6e81b8" />)}
      {SHIELDS.map(([text, x, y, w, fill, edge]) => (
        <g key={text}>
          <rect x={x - w / 2} y={y - 8} width={w} height="16" rx="2" fill={fill} stroke={edge} />
          <Label x={x} y={y + 4} $size={11} $color="#6f3f35" $halo="none">{text}</Label>
        </g>
      ))}
      {CURVED.map(([id, , text, size, color, italic]) => (
        <Label key={id} $size={size} $color={color} $italic={italic}>
          <textPath href={`#${id}`} startOffset="50%">{text}</textPath>
        </Label>
      ))}
      <Label x="129" y="441" $size={14.5} $italic $color="#8f001c">Enoggera</Label>
      <Label x="129" y="459" $size={14.5} $italic $color="#8f001c">Close Training</Label>
      <Label x="129" y="477" $size={14.5} $italic $color="#8f001c">Area</Label>
      <Label x="318" y="409" $size={12} $italic $color="#9c1420">Barracks</Label>
      <Label x="546" y="466" $size={10.2} $italic $color="#388a43">Banks Street</Label>
      <Label x="546" y="478" $size={10.2} $italic $color="#388a43">Reserve</Label>
      <Label x="657" y="509" $size={13.8} $color="#777">Newmarket</Label>
      <Label x="811" y="469" $size={13.8} $color="#777">Wilston</Label>
      <Label x="943" y="526" $size={13.8} $color="#777">Windsor</Label>
      <Label x="1066" y="426" $size={13.8} $color="#777">Albion</Label>
      <Label x="1310" y="447" $size={13.8} $color="#777">Ascot</Label>
      <Label x="1289" y="532" $size={13.8} $color="#777">Hamilton</Label>
      <Label x="37" y="624" $size={13.8} $color="#777">The Gap</Label>
      <Label x="482" y="623.5" $size={13.8} $color="#777">Ashgrove</Label>
      <Label x="729" y="463" $size={10} $color="#805234">Wilston</Label>
      <Label x="865" y="440" $size={10} $color="#805234">Eildon</Label>
      <Label x="865" y="452" $size={10} $color="#805234">Hill</Label>
      <Label x="865" y="464" $size={10} $color="#805234">80 m</Label>
      <Label x="1183" y="454" $size={10} $color="#805234">Bartleys</Label>
      <Label x="1183" y="466" $size={10} $color="#805234">Hill</Label>
      <Label x="1183" y="478" $size={10} $color="#805234">80 m</Label>
      <Label x="1189" y="521" $size={10} $color="#805234">Toorak</Label>
      <Label x="1189" y="533" $size={10} $color="#805234">55 m</Label>
      <Label x="700" y="471.5" $size={10} $bold $color="#4057b0">Newmarket</Label>
      <Label x="800" y="515" $size={10} $bold $color="#4057b0">Wilston</Label>
      <Label x="915" y="504" $size={10} $bold $color="#4057b0">Windsor</Label>
      <Label x="1314" y="427" $size={10} $bold $color="#4057b0">Ascot</Label>
      <Label x="1318" y="617" $size={9.6} transform="rotate(-88 1318 617)">rd</Label>
    </MapCanvas>
  );
}

export default function App() {
  return (
    <>
      <GlobalStyle />
      <Page>
        <WeatherButton>Get Weather</WeatherButton>
        <Readings>
          <Reading>Latitude: -27.4006016</Reading>
          <Reading>Longitude: 152.9806848</Reading>
          <Reading>Current Temperature: 22.6°C</Reading>
          <Reading>Wind Speed: 19.6 km/h</Reading>
        </Readings>
        <MapFrame>
          <StreetMap />
          <ZoomControl>
            <ZoomButton $first aria-label="Zoom in">+</ZoomButton>
            <ZoomButton aria-label="Zoom out">−</ZoomButton>
          </ZoomControl>
        </MapFrame>
      </Page>
    </>
  );
}
